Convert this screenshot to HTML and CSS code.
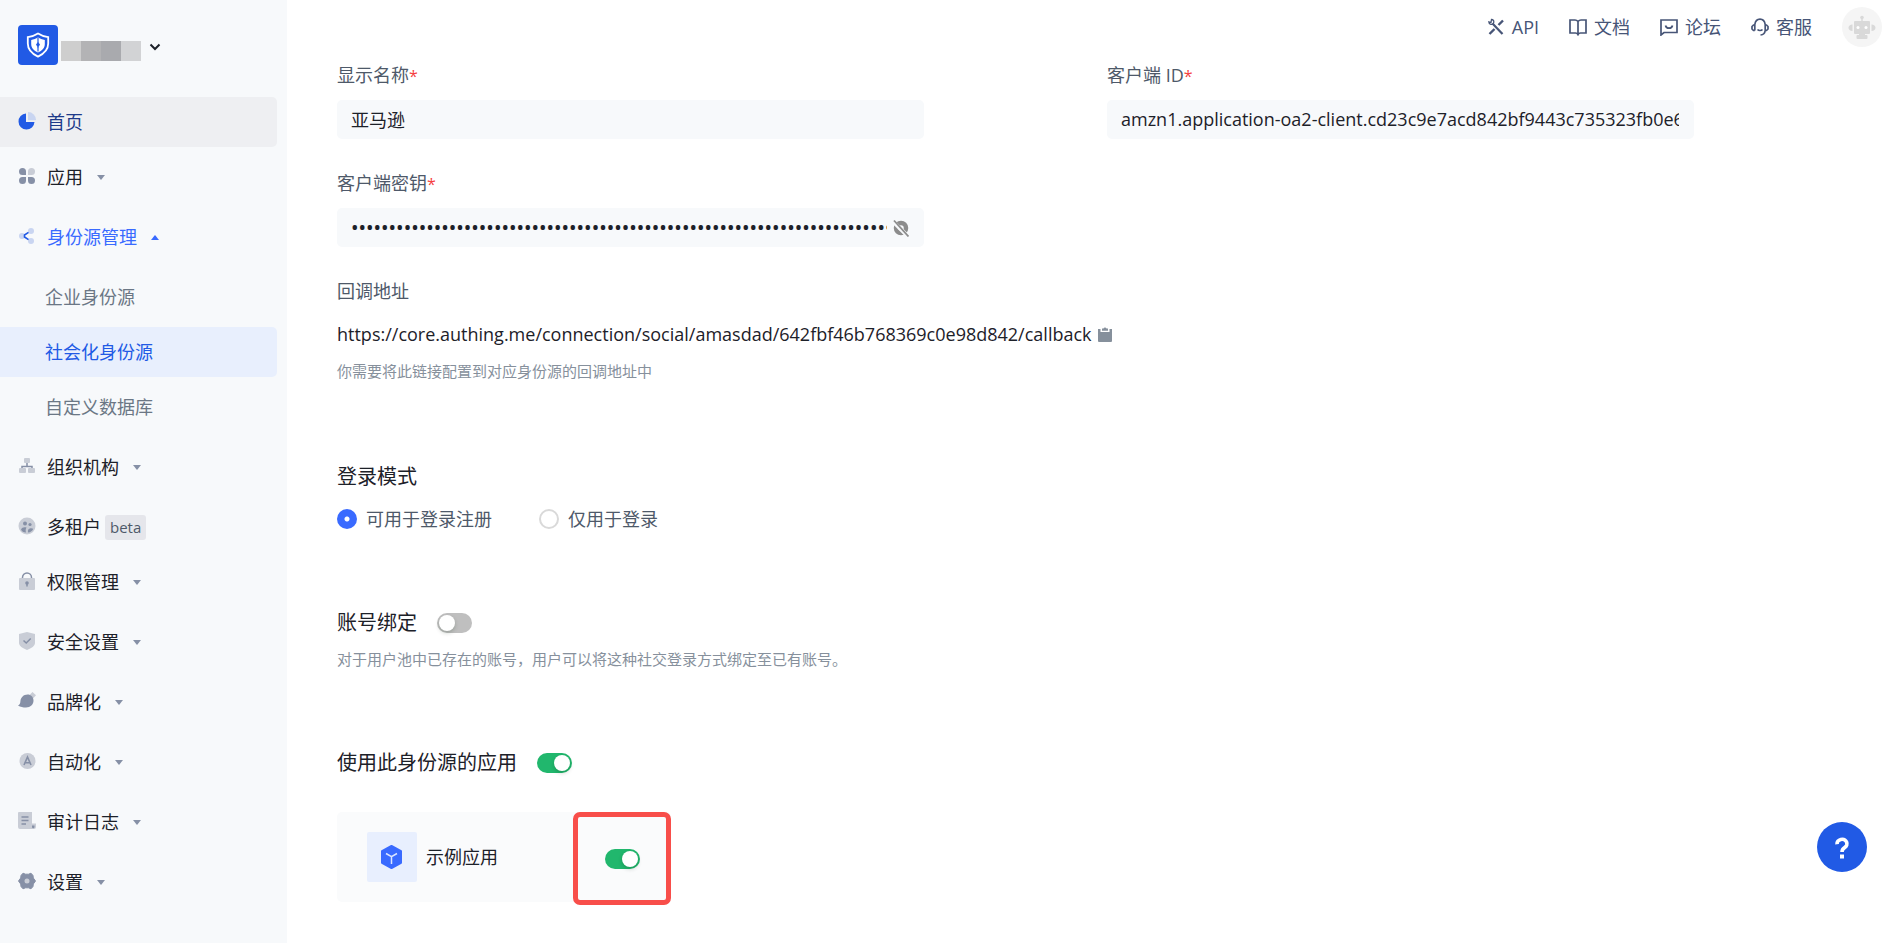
FILE: index.html
```html
<!DOCTYPE html>
<html lang="zh-CN">
<head>
<meta charset="utf-8">
<meta name="viewport" content="width=device-width, initial-scale=1">
<title>社会化身份源</title>
<link rel="stylesheet" href="styles.css">
</head>
<body>
<div class="app">
  <aside class="sidebar">
    <button class="pool" type="button" aria-label="切换用户池">
      <svg class="pool-logo" viewBox="0 0 40 40" aria-hidden="true">
        <rect width="40" height="40" rx="4" fill="#215ae5"/>
        <path d="M20 8.600c3 2 6.500 3.200 10.200 3.500v6.400c0 6-4.200 10.300-10.200 13.100-6-2.800-10.200-7.100-10.200-13.100v-6.400c3.700-.3 7.200-1.500 10.200-3.500z" fill="none" stroke="#fff" stroke-width="1.800"/>
        <path d="M20 12.500c2 1.300 4.300 2 6.800 2.400v4c0 4-2.600 6.400-6.800 8.600-4.200-2.200-6.800-4.600-6.800-8.600v-4c2.500-.4 4.800-1.100 6.800-2.400z" fill="#fff"/>
        <path d="M20 13v5M20 22v4.500" stroke="#215ae5" stroke-width="1.200"/>
        <path d="M20 17l2 2.600-2 3.400-2-3.400z" fill="#215ae5"/>
      </svg>
      <span class="pool-name"><i class="m1"></i><i class="m2"></i><i class="m3"></i><i class="m4"></i></span>
      <svg class="pool-arrow" viewBox="0 0 12 8" aria-hidden="true"><path d="M1.500 1.500 6 6l4.500-4.500" fill="none" stroke="#1d2129" stroke-width="2"/></svg>
    </button>

    <nav class="menu">
      <a class="item leaf home" href="#">
        <svg class="icon" viewBox="0 0 18 18"><path d="M8 1.500V10h8.500A8 8 0 1 1 8 1.500z" fill="#215ae5"/><path d="M10 0a8 8 0 0 1 8 8.200h-8z" fill="#c9d5f1"/></svg>
        <span>首页</span>
      </a>
      <a class="item" href="#">
        <svg class="icon" viewBox="0 0 18 18"><path d="M8 8H4.500A3.500 3.500 0 1 1 8 4.500zM8 10v3.500A3.500 3.500 0 1 1 4.500 10zM10 10h3.500a3.500 3.500 0 1 1-3.500 3.500z" fill="#8690a6"/><path d="M10 8V4.500A3.500 3.500 0 1 1 13.500 8z" fill="#c9cdd6"/></svg>
        <span>应用</span><svg class="caret" viewBox="0 0 8 5"><path d="M0 0h8L4 5z"/></svg>
      </a>
      <a class="item open" href="#">
        <svg class="icon" viewBox="0 0 18 18"><circle cx="4" cy="9" r="3" fill="#c9d5f1"/><circle cx="13" cy="4" r="3" fill="#c9d5f1"/><circle cx="13" cy="14" r="3" fill="#c9d5f1"/><path d="M10.500 5.300 6.500 8v2l4 2.700" fill="none" stroke="#215ae5" stroke-width="1.600"/></svg>
        <span>身份源管理</span><svg class="caret" viewBox="0 0 8 5"><path d="M0 5h8L4 0z"/></svg>
      </a>
      <div class="submenu">
        <a class="item leaf sub" href="#">企业身份源</a>
        <a class="item leaf sub current" href="#" aria-current="page">社会化身份源</a>
        <a class="item leaf sub" href="#">自定义数据库</a>
      </div>
      <a class="item" href="#">
        <svg class="icon" viewBox="0 0 18 18"><path d="M9 6v3.500M4 12V9.500h10V12" fill="none" stroke="#8690a6" stroke-width="1.500"/><rect x="6" y="1" width="6" height="5" rx="1" fill="#c9cdd6"/><rect x="1" y="11" width="7" height="5" rx="1" fill="#c9cdd6"/><rect x="10" y="11" width="7" height="5" rx="1" fill="#c9cdd6"/></svg>
        <span>组织机构</span><svg class="caret" viewBox="0 0 8 5"><path d="M0 0h8L4 5z"/></svg>
      </a>
      <a class="item leaf" href="#">
        <svg class="icon" viewBox="0 0 18 18"><circle cx="9" cy="9" r="8.500" fill="#c9cdd6"/><circle cx="7" cy="6.500" r="2" fill="#8690a6"/><circle cx="12" cy="7.500" r="1.600" fill="#8690a6"/><path d="M3 12.500C4 10.500 6 10 8.500 10.600 7.500 12 7.500 14 8 15.500 5.500 15.500 3.800 14.300 3 12.500zM10 15.500c-.4-2.500.5-4 2.500-4.300 1-.1 2 .1 2.700.5-.6 2-2.500 3.600-5.200 3.800z" fill="#8690a6"/></svg>
        <span>多租户</span><span class="badge">beta</span>
      </a>
      <a class="item" href="#">
        <svg class="icon" viewBox="0 0 18 18"><path d="M4.500 7V5.500a4.500 4.500 0 0 1 9 0V7" fill="none" stroke="#8690a6" stroke-width="1.500"/><rect x="1" y="6" width="16" height="12" rx="1" fill="#c9cdd6"/><circle cx="9" cy="11" r="1.800" fill="#8690a6"/><path d="M9 11v3.500" stroke="#8690a6" stroke-width="1.500"/></svg>
        <span>权限管理</span><svg class="caret" viewBox="0 0 8 5"><path d="M0 0h8L4 5z"/></svg>
      </a>
      <a class="item" href="#">
        <svg class="icon" viewBox="0 0 18 18"><path d="M9 0l8 2v9c0 3-3.500 5-8 7-4.500-2-8-4-8-7V2z" fill="#c9cdd6"/><path d="M5.500 8.500 8.200 11l4.500-4.500" fill="none" stroke="#8690a6" stroke-width="1.500"/></svg>
        <span>安全设置</span><svg class="caret" viewBox="0 0 8 5"><path d="M0 0h8L4 5z"/></svg>
      </a>
      <a class="item" href="#">
        <svg class="icon" viewBox="0 0 18 18"><path d="M14.500 0 18 3.200 14.500 7 11 3.500z" fill="#c9cdd6"/><path d="M9.500 2.500c3.500 0 6 2.600 6 6 0 4-3 7-7.500 7-3 0-5.500-.6-8-2 2-.8 2.200-2.200 2.400-4.200.4-4 3.200-6.800 7.100-6.800z" fill="#8690a6"/></svg>
        <span>品牌化</span><svg class="caret" viewBox="0 0 8 5"><path d="M0 0h8L4 5z"/></svg>
      </a>
      <a class="item" href="#">
        <svg class="icon" viewBox="0 0 18 18"><circle cx="9.500" cy="9" r="8" fill="#c9cdd6"/><path d="M6 13 9.500 5 13 13M7.200 10.700h4.600" fill="none" stroke="#8690a6" stroke-width="1.600"/></svg>
        <span>自动化</span><svg class="caret" viewBox="0 0 8 5"><path d="M0 0h8L4 5z"/></svg>
      </a>
      <a class="item" href="#">
        <svg class="icon" viewBox="0 0 18 18"><path d="M1 0h13v11.500h4V15a2 2 0 0 1-2 2H2a2 2 0 0 1-2-2V1a1 1 0 0 1 1-1z" fill="#c9cdd6"/><path d="M3.500 5h7M3.500 8.500h7M3.500 12H8" stroke="#8690a6" stroke-width="1.500"/><path d="M14 13.500h2.500V15a1.200 1.200 0 0 1-2.500 0z" fill="#8690a6"/></svg>
        <span>审计日志</span><svg class="caret" viewBox="0 0 8 5"><path d="M0 0h8L4 5z"/></svg>
      </a>
      <a class="item" href="#">
        <svg class="icon" viewBox="0 0 18 18"><path d="M5 1.200 7.500 2.200h3L13 1.200 15 3.500l.3 2.500L17.500 9l-2.200 3-.3 2.500-2 2.300-2.500-1h-3l-2.500 1-2-2.300L2.700 12 .5 9l2.200-3L3 3.500z" fill="#8690a6" stroke="#8690a6" stroke-linejoin="round"/><circle cx="9" cy="9" r="2.500" fill="#c9cdd6"/></svg>
        <span>设置</span><svg class="caret" viewBox="0 0 8 5"><path d="M0 0h8L4 5z"/></svg>
      </a>
    </nav>
  </aside>

  <div class="page">
    <header class="topbar">
      <a class="toplink" href="#">
        <svg viewBox="0 0 18 18"><path d="M2.500 16 7.500 11M11.500 7 16 2.500" stroke-width="2.400"/><path d="M5.500 5.500 15.500 16" stroke-width="2.200"/><path d="M4.500 1.500c1.500 0 2.500 1.200 2.300 2.700-.2 1.600-1.700 2.400-3 2.100C2.500 6 1.800 5 1.800 3.800L4 4.500z" stroke-width="1.300"/></svg>
        <span>API</span>
      </a>
      <a class="toplink" href="#">
        <svg viewBox="0 0 18 18"><path d="M9 3.500V17M9 3.500C8 2.300 7.500 2 6 2H1v13h5.500c1.300 0 2 .5 2.500 1.500.5-1 1.200-1.500 2.500-1.500H17V2h-5c-1.500 0-2 .3-3 1.500z" stroke-width="1.700"/></svg>
        <span>文档</span>
      </a>
      <a class="toplink" href="#">
        <svg viewBox="0 0 18 18"><path d="M1 2h16v12.500H4L1 17z" stroke-width="1.700"/><path d="M5.500 7.500c.8 3.600 6.200 3.600 7 0" stroke-width="1.700"/></svg>
        <span>论坛</span>
      </a>
      <a class="toplink" href="#">
        <svg viewBox="0 0 18 18"><path d="M3.800 12.500V6.500C4.300 3 6.300 1.200 9 1.200s4.700 1.800 5.200 5.300v6c-.3 2.600-1.800 4.200-4.700 4.500M3.800 7H2.500L1 8.500V11l1.500 1.500h1.300M14.200 7h1.300L17 8.500V11l-1.500 1.500h-1.300M6.500 11.500c1.200 1.300 3.800 1.300 5 0" stroke-width="1.700"/></svg>
        <span>客服</span>
      </a>
      <button class="avatar" type="button" aria-label="账户">
        <svg viewBox="0 0 40 40"><circle cx="20" cy="20" r="20" fill="#f5f5f5"/><g fill="#d9d9d9"><circle cx="20" cy="10.500" r="1.800"/><path d="M19.300 11h1.400v4h-1.400z"/><rect x="12" y="14" width="16" height="13" rx="1"/><rect x="14.500" y="28" width="11" height="4" rx="1"/><rect x="17" y="26" width="6" height="3"/><path d="M10.500 17.500v6.500c-2.500 0-4-1.400-4-3.200s1.500-3.300 4-3.300zM29.500 17.500v6.500c2.500 0 4-1.400 4-3.200s-1.500-3.300-4-3.300z"/></g><circle cx="16" cy="20.500" r="1.500" fill="#fff"/><circle cx="24" cy="20.500" r="1.500" fill="#fff"/></svg>
      </button>
    </header>

    <main class="content">
      <div class="fields">
        <div class="field">
          <label class="label" for="display-name">显示名称<span class="req">*</span></label>
          <input class="input" id="display-name" type="text" value="亚马逊">
        </div>
        <div class="field">
          <label class="label" for="client-id">客户端 ID<span class="req">*</span></label>
          <input class="input" id="client-id" type="text" value="amzn1.application-oa2-client.cd23c9e7acd842bf9443c735323fb0e6">
        </div>
        <div class="field">
          <label class="label" for="client-secret">客户端密钥<span class="req">*</span></label>
          <div class="input secret">
            <input id="client-secret" type="password" value="0123456789012345678901234567890123456789012345678901234567890123456789012345">
            <button class="eye" type="button" aria-label="显示密钥">
              <svg viewBox="0 0 16 18"><circle cx="8" cy="9" r="5" fill="none" stroke="#8c8c8c" stroke-width="4.500"/><path d="M0 2.500 14.500 17" stroke="#f7f9fb" stroke-width="4"/><path d="M1 1.500 15.500 17.500" stroke="#8c8c8c" stroke-width="1.800"/></svg>
            </button>
          </div>
        </div>
      </div>

      <section class="callback">
        <h3 class="label">回调地址</h3>
        <p class="url"><span>https://core.authing.me/connection/social/amasdad/642fbf46b768369c0e98d842/callback</span>
          <button class="copy" type="button" aria-label="复制">
            <svg viewBox="0 0 14 15"><path d="M0 2h2.500v3h9V2H14v12a1 1 0 0 1-1 1H1a1 1 0 0 1-1-1z" fill="#86909c"/><path d="M4 1.500h1.500a1.600 1.600 0 0 1 3 0H10v2.200H4z" fill="#86909c"/></svg>
          </button>
        </p>
        <p class="hint">你需要将此链接配置到对应身份源的回调地址中</p>
      </section>

      <section class="mode">
        <h2 class="title">登录模式</h2>
        <div class="radios">
          <label class="radio"><input type="radio" name="mode" checked>可用于登录注册</label>
          <label class="radio"><input type="radio" name="mode">仅用于登录</label>
        </div>
      </section>

      <section class="binding">
        <label class="title switch-row">账号绑定<input class="switch" type="checkbox" role="switch"></label>
        <p class="hint">对于用户池中已存在的账号，用户可以将这种社交登录方式绑定至已有账号。</p>
      </section>

      <section class="apps">
        <label class="title switch-row">使用此身份源的应用<input class="switch" type="checkbox" role="switch" checked></label>
        <div class="card">
          <svg class="card-icon" viewBox="0 0 50 50" aria-hidden="true"><rect width="50" height="50" rx="2" fill="#e8effe"/><path d="M24.500 14 34 19.200v11.600L24.500 36 15 30.800V19.200z" fill="#396aff" stroke="#396aff" stroke-width="2" stroke-linejoin="round"/><path d="M19 21.500l5.500 3.200 5.500-3.200M24.500 24.700V32" fill="none" stroke="#dbe5ff" stroke-width="1.500"/></svg>
          <label class="card-name" for="demo-app">示例应用</label>
          <div class="highlight"><input class="switch" id="demo-app" type="checkbox" role="switch" checked></div>
        </div>
      </section>
    </main>
  </div>
</div>
<button class="help" type="button" aria-label="帮助">
  <svg viewBox="0 0 50 50"><path d="M20 22.200a5 4.500 0 1 1 7.600 3.400c-1.800 1.100-2.600 1.700-2.600 4.400" fill="none" stroke="#fff" stroke-width="3.600"/><rect x="23" y="32.500" width="4" height="4" fill="#fff"/></svg>
</button>
</body>
</html>
```
FILE: styles.css
```css
* {
  box-sizing: border-box;
}

body {
  margin: 0;
  background: #fff;
  color: #1d2129;
  font-family: "Open Sans", "Noto Sans CJK SC", sans-serif;
  font-size: 18px;
  font-weight: 400;
  line-height: 28px;
}

button,
input {
  margin: 0;
  padding: 0;
  border: 0;
  background: none;
  color: inherit;
  font: inherit;
}

h2,
h3,
p {
  margin: 0;
  font-weight: inherit;
}

svg {
  display: block;
  flex: none;
}

a {
  color: inherit;
  text-decoration: none;
}

.app {
  display: flex;
  min-height: 100vh;
}

/* Sidebar */
.sidebar {
  flex: none;
  width: 287px;
  padding: 25px 10px 0 0;
  background: #f7f9fb;
}

.pool {
  display: flex;
  align-items: center;
  gap: 3px;
  padding-left: 18px;
}

.pool-logo {
  width: 40px;
  height: 40px;
}

.pool-name {
  display: flex;
  width: 80px;
  height: 20px;
  margin-top: 12px;
}

.pool-name i {
  flex: 1;
}

.m1 { background: #cecece; }
.m2 { background: #b3b3b5; }
.m3 { background: #a9aaae; }
.m4 { background: #d2d3d5; }

.pool-arrow {
  width: 12px;
  height: 8px;
  margin: 4px 0 0 5px;
}

.menu {
  padding-top: 32px;
}

.item {
  display: flex;
  align-items: center;
  height: 50px;
  margin-bottom: 10px;
  padding-left: 18px;
  border-radius: 0 5px 5px 0;
}

.leaf {
  margin-bottom: 5px;
}

.submenu {
  padding-bottom: 5px;
}

.sub {
  padding-left: 45px;
  color: #6b7785;
}

.home {
  background: #eeeff2;
  color: #1d3a8a;
}

.open {
  color: #396aff;
}

.current {
  background: #e8effd;
  color: #215ae5;
}

.icon {
  width: 18px;
  height: 18px;
  margin: 0 11px 2px 0;
}

.caret {
  width: 8px;
  height: 5px;
  margin-left: 14px;
  fill: #8690a6;
}

.open .caret {
  fill: #396aff;
}

.badge {
  margin-left: 4px;
  padding: 0 5px;
  border-radius: 3px;
  background: #e5e6eb;
  color: #4e5969;
  font-size: 15px;
  line-height: 25px;
}

/* Top bar */
.page {
  flex: 1;
  min-width: 0;
}

.topbar {
  display: flex;
  align-items: center;
  justify-content: flex-end;
  gap: 30px;
  height: 54px;
  padding-right: 4px;
  color: #475577;
}

.toplink {
  display: flex;
  align-items: center;
  gap: 7px;
}

.toplink svg {
  width: 18px;
  height: 18px;
  fill: none;
  stroke: #475577;
}

.avatar svg {
  width: 40px;
  height: 40px;
}

/* Form */
.content {
  padding: 7px 192px 38px 50px;
}

.fields {
  display: grid;
  grid-template-columns: 1fr 1fr;
  gap: 30px 183px;
}

.field {
  display: grid;
  gap: 11px;
}

.label {
  color: #4e5969;
  font-size: 18px;
}

.req {
  color: #f53f3f;
  font-size: 16px;
  line-height: 1;
}

.input {
  width: 100%;
  height: 39px;
  padding: 0 15px 2px 14px;
  border-radius: 5px;
  background: #f7f9fb;
}

.secret {
  display: flex;
  align-items: center;
  gap: 6px;
  padding-bottom: 0;
}

.secret input {
  flex: 1;
  min-width: 0;
  font-family: "Noto Sans", sans-serif;
  font-size: 20px;
}

.eye svg {
  width: 16px;
  height: 18px;
}

.callback {
  display: grid;
  gap: 9px;
  padding-top: 30px;
}

.url {
  display: flex;
  align-items: center;
  gap: 6px;
  padding-top: 6px;
}

.copy svg {
  width: 14px;
  height: 15px;
}

.hint {
  color: #86909c;
  font-size: 15px;
}

.title {
  font-size: 20px;
}

.mode {
  display: grid;
  gap: 14px;
  padding-top: 78px;
}

.radios {
  display: flex;
  gap: 47px;
  color: #4e5969;
}

.radio {
  display: flex;
  align-items: center;
  gap: 9px;
}

.radio input {
  width: 20px;
  height: 20px;
  border: 2px solid #d9d9d9;
  border-radius: 50%;
  appearance: none;
}

.radio input:checked {
  border: 0;
  background: radial-gradient(circle, #fff 2px, #396aff 3px);
}

.binding {
  display: grid;
  gap: 8px;
  padding-top: 76px;
}

.switch-row {
  display: flex;
  align-items: center;
  gap: 20px;
}

.switch {
  display: flex;
  align-items: center;
  width: 35px;
  height: 20px;
  padding: 0 2px;
  border-radius: 10px;
  background: #bfbfbf;
  appearance: none;
}

.switch::before {
  width: 16px;
  height: 16px;
  border-radius: 50%;
  background: #fff;
  box-shadow: 0 2px 4px rgba(0, 35, 11, 0.2);
  content: "";
}

.switch:checked {
  justify-content: flex-end;
  background: #21b76d;
}

.apps {
  display: grid;
  gap: 35px;
  padding-top: 76px;
}

.card {
  display: flex;
  align-items: center;
  width: 334px;
  height: 90px;
  padding-left: 30px;
  border-radius: 5px;
  background: #fafbfc;
}

.card-icon {
  width: 50px;
  height: 50px;
  margin-right: 9px;
}

.highlight {
  display: flex;
  align-items: center;
  justify-content: center;
  width: 98px;
  height: 93px;
  margin: 0 0 -3px auto;
  border: 5px solid #f84e4a;
  border-radius: 7px;
}

.help {
  position: fixed;
  right: 19px;
  bottom: 71px;
  width: 50px;
  height: 50px;
  border-radius: 50%;
  background: #215ae5;
}
```
